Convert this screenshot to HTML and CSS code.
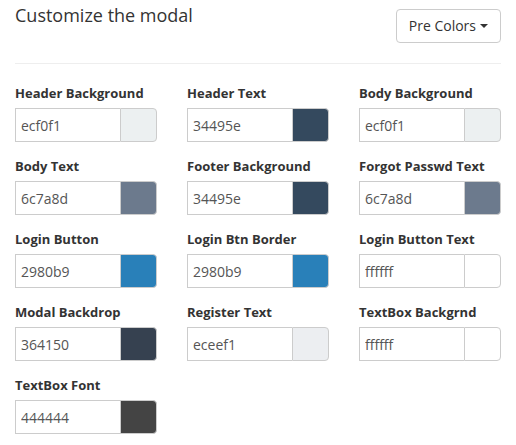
FILE: index.html
```html
<!DOCTYPE html>
<html>
<head>
<meta charset="utf-8">
<link rel="stylesheet" href="styles.css">
</head>
<body>
<div class="page">
  <div class="head">
    <h4 class="title">Customize the modal</h4>
    <button class="btn">Pre Colors <span class="caret"></span></button>
  </div>
  <hr class="rule">
  <div class="grid">
    <div class="field"><label>Header Background</label><div class="group"><input value="ecf0f1"><span class="sw" style="background:#ecf0f1"></span></div></div>
    <div class="field"><label>Header Text</label><div class="group"><input value="34495e"><span class="sw" style="background:#34495e"></span></div></div>
    <div class="field"><label>Body Background</label><div class="group"><input value="ecf0f1"><span class="sw" style="background:#ecf0f1"></span></div></div>
    <div class="field"><label>Body Text</label><div class="group"><input value="6c7a8d"><span class="sw" style="background:#6c7a8d"></span></div></div>
    <div class="field"><label>Footer Background</label><div class="group"><input value="34495e"><span class="sw" style="background:#34495e"></span></div></div>
    <div class="field"><label>Forgot Passwd Text</label><div class="group"><input value="6c7a8d"><span class="sw" style="background:#6c7a8d"></span></div></div>
    <div class="field"><label>Login Button</label><div class="group"><input value="2980b9"><span class="sw" style="background:#2980b9"></span></div></div>
    <div class="field"><label>Login Btn Border</label><div class="group"><input value="2980b9"><span class="sw" style="background:#2980b9"></span></div></div>
    <div class="field"><label>Login Button Text</label><div class="group"><input value="ffffff"><span class="sw" style="background:#ffffff"></span></div></div>
    <div class="field"><label>Modal Backdrop</label><div class="group"><input value="364150"><span class="sw" style="background:#364150"></span></div></div>
    <div class="field"><label>Register Text</label><div class="group"><input value="eceef1"><span class="sw" style="background:#eceef1"></span></div></div>
    <div class="field"><label>TextBox Backgrnd</label><div class="group"><input value="ffffff"><span class="sw" style="background:#ffffff"></span></div></div>
    <div class="field"><label>TextBox Font</label><div class="group"><input value="444444"><span class="sw" style="background:#444444"></span></div></div>
  </div>
</div>
</body>
</html>
```
FILE: styles.css
```css
html, body { margin: 0; padding: 0; background: #fff; }
body { font-family: "Open Sans", sans-serif; color: #333; font-size: 14px; line-height: 1.42857; }
.page { padding: 0 15px; }
.head { display: flex; justify-content: space-between; align-items: flex-start; height: 43px; }
.title { margin: 0; padding-top: 6px; font-size: 18px; font-weight: 400; line-height: 1.1; color: #333; }
.btn { margin-top: 9px; height: 34px; padding: 6px 12px; border: 1px solid #ccc; border-radius: 4px; background: #fff; color: #333; font-family: "Open Sans", sans-serif; font-size: 14px; line-height: 20px; display: flex; align-items: center; gap: 4px; }
.caret { display: inline-block; width: 0; height: 0; border-top: 4px solid #333; border-left: 4px solid transparent; border-right: 4px solid transparent; }
.rule { margin: 20px 0 20px; border: 0; border-top: 1px solid #eee; }
.grid { display: grid; grid-template-columns: repeat(3, 142px); column-gap: 30px; }
.field { margin-bottom: 15px; }
.field label { display: block; font-size: 13px; font-weight: 700; margin-bottom: 5px; color: #333; line-height: 19px; }
.group { display: flex; width: 142px; height: 34px; }
.group input { box-sizing: border-box; width: 105px; height: 34px; border: 1px solid #ccc; border-right: 0; border-radius: 0; padding: 6px 5px; font-family: "Open Sans", sans-serif; font-size: 14px; color: #555; outline: none; margin: 0; }
.sw { box-sizing: border-box; flex: 1; height: 34px; border: 1px solid #ccc; border-radius: 0 4px 4px 0; }
```
